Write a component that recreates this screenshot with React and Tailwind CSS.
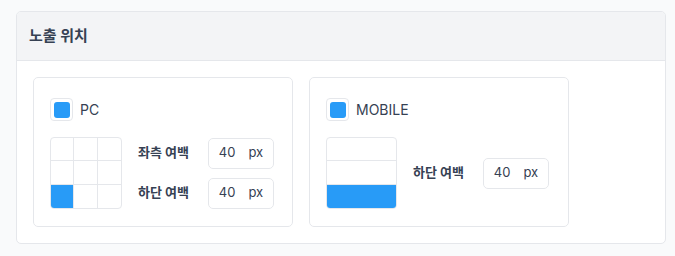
const font = { fontFamily: '"Inter", "Noto Sans CJK KR", sans-serif' };

const Check = ({ label }) => (
  <div className="flex items-center gap-[7px]">
    <span className="w-[23px] h-[23px] rounded-[4px] border border-gray-200 bg-white flex items-center justify-center">
      <span className="w-[16px] h-[16px] rounded-[3px] bg-[#289bf7]" />
    </span>
    <span className="text-[14px] text-gray-700">{label}</span>
  </div>
);

const PxInput = ({ value }) => (
  <div className="w-[66px] h-[31px] rounded-[5px] border border-gray-200 bg-white flex items-center justify-center gap-[13px] text-[13px] text-gray-700">
    <span>{value}</span>
    <span>px</span>
  </div>
);

const Field = ({ label, value }) => (
  <div className="flex items-center">
    <span className="w-[70px] text-[13px] font-bold text-gray-700">{label}</span>
    <PxInput value={value} />
  </div>
);

export default function App() {
  return (
    <div className="w-[675px] h-[256px] bg-[#f9fafb] pt-[11px] px-[16px]" style={font}>
      <div className="w-[650px] rounded-[5px] border border-gray-200 bg-white overflow-hidden">
        <div className="h-[49px] bg-gray-100 border-b border-gray-200 flex items-center px-[12px]">
          <h2 className="text-[15px] font-bold text-gray-700">노출 위치</h2>
        </div>
        <div className="p-[16px] flex gap-[16px]">
          {/* PC */}
          <div className="w-[260px] h-[150px] rounded-[5px] border border-gray-200 px-[16px] pt-[20px]">
            <Check label="PC" />
            <div className="mt-[16px] flex items-center gap-[16px]">
              <div className="w-[72px] h-[72px] rounded-[4px] border border-gray-200 grid grid-cols-3 grid-rows-3 overflow-hidden">
                {[0, 1, 2, 3, 4, 5, 6, 7, 8].map((i) => (
                  <div
                    key={i}
                    className={`${i % 3 !== 2 ? 'border-r' : ''} ${i < 6 ? 'border-b' : ''} border-gray-200 ${i === 6 ? 'bg-[#289bf7]' : ''}`}
                  />
                ))}
              </div>
              <div className="flex flex-col gap-[9px]">
                <Field label="좌측 여백" value="40" />
                <Field label="하단 여백" value="40" />
              </div>
            </div>
          </div>
          {/* MOBILE */}
          <div className="w-[260px] h-[150px] rounded-[5px] border border-gray-200 px-[16px] pt-[20px]">
            <Check label="MOBILE" />
            <div className="mt-[16px] flex items-center gap-[16px]">
              <div className="w-[71px] h-[72px] rounded-[4px] border border-gray-200 grid grid-rows-3 overflow-hidden">
                <div className="border-b border-gray-200" />
                <div className="border-b border-gray-200" />
                <div className="bg-[#289bf7]" />
              </div>
              <Field label="하단 여백" value="40" />
            </div>
          </div>
        </div>
      </div>
    </div>
  );
}
